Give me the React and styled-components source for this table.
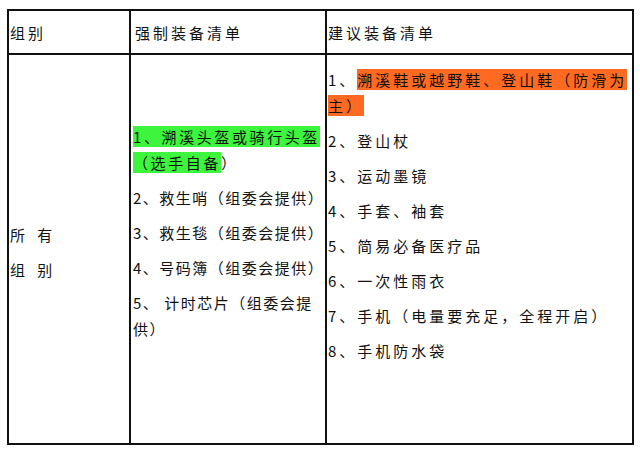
import React from 'react'
import styled, { createGlobalStyle } from 'styled-components'

const GlobalStyle = createGlobalStyle`
    html, body {
        margin: 0;
        padding: 0;
        background: #ffffff;
    }
    body {
        font-family: "Noto Sans CJK SC", "Liberation Serif", sans-serif;
        color: #111111;
    }
`;

const Page = styled.div`
    padding: 9px 0 0 7px;
`;
const Table = styled.table`
    border-collapse: collapse;
    table-layout: fixed;
    width: 627px;
    border: 2px solid #111111;
`;
const Col = styled.col`
    width: ${({w}) => w}px;
`;
const Row = styled.tr`
    height: ${({h}) => h}px;
`;
const HeadCell = styled.th`
    border: 2px solid #111111;
    padding: 0 0 0 ${({padLeft}) => padLeft || 1}px;
    text-align: left;
    font-weight: normal;
    font-size: 15px;
    letter-spacing: 3px;
    white-space: nowrap;
`;
const Cell = styled.td`
    border: 2px solid #111111;
    vertical-align: ${({middle}) => middle ? 'middle' : 'top'};
    padding: ${({padTop}) => padTop || 0}px 0 0 ${({padLeft}) => padLeft || 1}px;
    font-size: 15px;
    letter-spacing: ${({spacing}) => spacing ?? 3}px;
    word-spacing: ${({wordGap}) => wordGap || 0}px;
`;
const Line = styled.p`
    margin: 0 0 9px 0;
    line-height: 26px;
    white-space: nowrap;
    ${({spacing}) => spacing ? `letter-spacing: ${spacing}px;` : ''}
    &:last-child {
        margin-bottom: 0;
    }
`;
const Mark = styled.span`
    background: ${({color}) => color};
`;

const required = [
    '2、救生哨（组委会提供）',
    '3、救生毯（组委会提供）',
    '4、号码簿（组委会提供）',
]

const suggested = [
    '2、登山杖',
    '3、运动墨镜',
    '4、手套、袖套',
    '5、简易必备医疗品',
    '6、一次性雨衣',
    '7、手机（电量要充足，全程开启）',
    '8、手机防水袋',
]

const App = () => {
    return (
        <Page>
            <GlobalStyle />
            <Table>
                <colgroup>
                    <Col w={122} />
                    <Col w={196} />
                    <Col w={307} />
                </colgroup>
                <thead>
                    <Row h={44}>
                        <HeadCell>组别</HeadCell>
                        <HeadCell padLeft={4}>强制装备清单</HeadCell>
                        <HeadCell padLeft={1}>建议装备清单</HeadCell>
                    </Row>
                </thead>
                <tbody>
                    <Row h={390}>
                        <Cell middle padTop={6} wordGap={3}>
                            <Line>所 有</Line>
                            <Line>组 别</Line>
                        </Cell>
                        <Cell padTop={69} padLeft={2} spacing={1.5}>
                            <Line spacing={2.6}>
                                <Mark color="#3cf53c">1、溯溪头盔或骑行头盔</Mark><br />
                                <Mark color="#3cf53c">（选手自备</Mark>）
                            </Line>
                            {required.map(item => (
                                <Line key={item}>{item}</Line>
                            ))}
                            <Line>
                                5、 计时芯片（组委会提<br />
                                供）
                            </Line>
                        </Cell>
                        <Cell padTop={12} padLeft={1}>
                            <Line>
                                1、<Mark color="#ff6a22">溯溪鞋或越野鞋、登山鞋（防滑为</Mark><br />
                                <Mark color="#ff6a22">主）</Mark>
                            </Line>
                            {suggested.map(item => (
                                <Line key={item}>{item}</Line>
                            ))}
                        </Cell>
                    </Row>
                </tbody>
            </Table>
        </Page>
    )
}

export default App
